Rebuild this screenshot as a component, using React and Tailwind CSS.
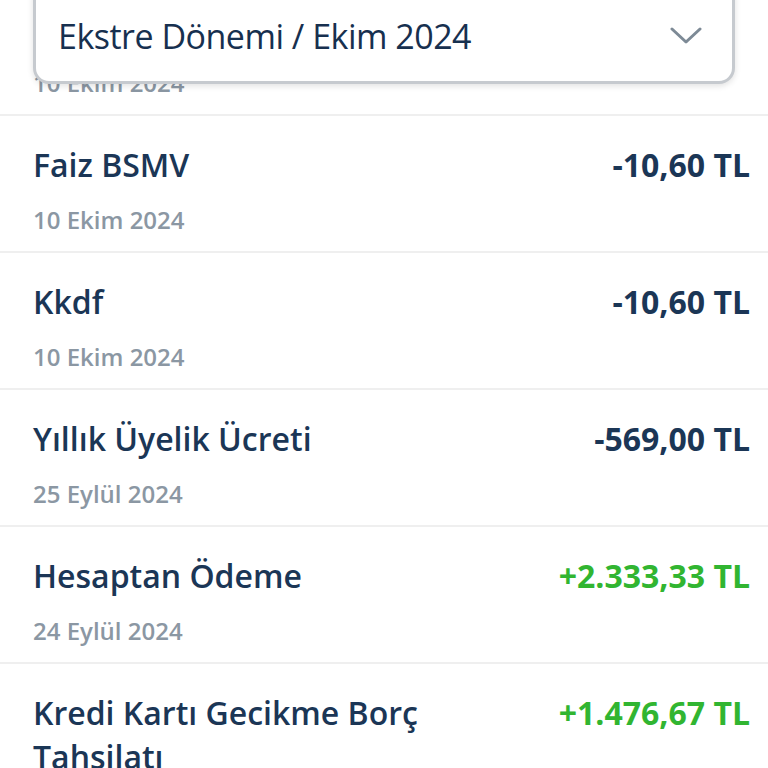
import React from 'react';

const rows = [
  { title: 'Faiz', date: '10 Ekim 2024', amount: '-10,60 TL', plus: false },
  { title: 'Faiz BSMV', date: '10 Ekim 2024', amount: '-10,60 TL', plus: false },
  { title: 'Kkdf', date: '10 Ekim 2024', amount: '-10,60 TL', plus: false },
  { title: 'Yıllık Üyelik Ücreti', date: '25 Eylül 2024', amount: '-569,00 TL', plus: false },
  { title: 'Hesaptan Ödeme', date: '24 Eylül 2024', amount: '+2.333,33 TL', plus: true },
  { title: 'Kredi Kartı Gecikme Borç Tahsilatı', date: '24 Eylül 2024', amount: '+1.476,67 TL', plus: true },
];

const Row = ({ title, date, amount, plus }) => (
  <div className="h-[137px] border-b-2 border-[#efefef] pl-[33px] pr-[18px] pt-[27px] flex justify-between items-start">
    <div className="flex flex-col">
      <div className="text-[32px] leading-[44px] font-semibold text-[#1b3656] max-w-[400px]">{title}</div>
      <div className="text-[24px] leading-[32px] font-semibold text-[#8b97a3] mt-[17px]">{date}</div>
    </div>
    <div className={`text-[32px] leading-[44px] font-bold ${plus ? 'text-[#31b531]' : 'text-[#1b3656]'}`}>
      {amount}
    </div>
  </div>
);

export default function App() {
  return (
    <div className="relative w-[768px] h-[768px] overflow-hidden bg-white" style={{ fontFamily: '"Open Sans", sans-serif' }}>
      <div className="-mt-[21px]">
        {rows.map((r, i) => (
          <Row key={i} {...r} />
        ))}
      </div>

      {/* sticky header strip behind the period select */}
      <div className="absolute left-0 top-0 w-full h-[62px] bg-white" />

      <div className="absolute left-[33px] top-[-20px] w-[702px] h-[104px] bg-white border-[3px] border-[#c6cacf] rounded-[16px] shadow-[0_2px_6px_rgba(0,0,0,0.12)] flex items-center justify-between pl-[22px] pr-[30px] pt-[8px]">
        <span className="text-[34px] font-medium text-[#17304f] tracking-[-0.5px]">Ekstre Dönemi / Ekim 2024</span>
        <svg width="32" height="18" viewBox="0 0 32 18" fill="none">
          <path d="M2 2 L16 15 L30 2" stroke="#7d8a96" strokeWidth="3" strokeLinecap="round" strokeLinejoin="round" />
        </svg>
      </div>
    </div>
  );
}
